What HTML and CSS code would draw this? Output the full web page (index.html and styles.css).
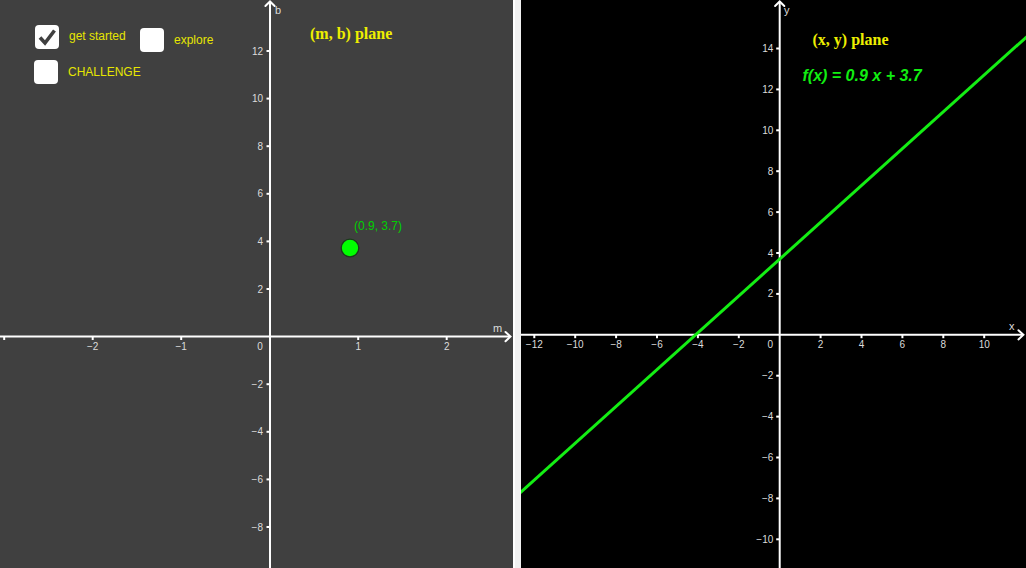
FILE: index.html
```html
<!DOCTYPE html>
<html>
<head>
<meta charset="utf-8">
<link rel="stylesheet" href="styles.css">
</head>
<body>
<div class="app">
  <section class="panel panel-mb">
    <svg class="graph" width="513" height="568" viewBox="0 0 513 568">
      <g class="axis">
        <line x1="0" y1="336.6" x2="510" y2="336.6"/>
        <polyline points="505.5,332 510.5,336.6 505.5,341.2"/>
        <line x1="270" y1="568" x2="270" y2="1.5"/>
        <polyline points="265.4,6 270,1.5 274.6,6"/>
      </g>
      <g class="ticks">
        <line x1="4.2" y1="336.6" x2="4.2" y2="340"/>
        <line x1="92.7" y1="336.6" x2="92.7" y2="340"/>
        <line x1="181.2" y1="336.6" x2="181.2" y2="340"/>
        <line x1="358.2" y1="336.6" x2="358.2" y2="340"/>
        <line x1="446.7" y1="336.6" x2="446.7" y2="340"/>
        <line x1="266.5" y1="51" x2="270" y2="51"/>
        <line x1="266.5" y1="98.6" x2="270" y2="98.6"/>
        <line x1="266.5" y1="146.2" x2="270" y2="146.2"/>
        <line x1="266.5" y1="193.8" x2="270" y2="193.8"/>
        <line x1="266.5" y1="241.4" x2="270" y2="241.4"/>
        <line x1="266.5" y1="289" x2="270" y2="289"/>
        <line x1="266.5" y1="384.2" x2="270" y2="384.2"/>
        <line x1="266.5" y1="431.8" x2="270" y2="431.8"/>
        <line x1="266.5" y1="479.4" x2="270" y2="479.4"/>
        <line x1="266.5" y1="527" x2="270" y2="527"/>
      </g>
      <g class="tick-labels xl">
        <text x="92.7" y="350">−2</text>
        <text x="181.2" y="350">−1</text>
        <text x="260" y="350">0</text>
        <text x="358.2" y="350">1</text>
        <text x="446.7" y="350">2</text>
      </g>
      <g class="tick-labels yl">
        <text x="263" y="54.5">12</text>
        <text x="263" y="102.1">10</text>
        <text x="263" y="149.7">8</text>
        <text x="263" y="197.3">6</text>
        <text x="263" y="244.9">4</text>
        <text x="263" y="292.5">2</text>
        <text x="263" y="387.7">−2</text>
        <text x="263" y="435.3">−4</text>
        <text x="263" y="482.9">−6</text>
        <text x="263" y="530.5">−8</text>
      </g>
      <text class="axis-name" x="275" y="14">b</text>
      <text class="axis-name" x="493" y="332">m</text>
      <text class="plane-title" x="310" y="38.5">(m, b) plane</text>
      <circle class="point" cx="350" cy="248" r="8.8"/>
      <text class="point-label" x="354" y="230">(0.9, 3.7)</text>
    </svg>
    <label class="control control-start">
      <span class="box checked">
        <svg width="24" height="24" viewBox="0 0 24 24"><polyline points="5,12.5 10,18 19.5,5.5"/></svg>
      </span>
      <span class="control-text">get started</span>
    </label>
    <label class="control control-explore">
      <span class="box"></span>
      <span class="control-text">explore</span>
    </label>
    <label class="control control-challenge">
      <span class="box"></span>
      <span class="control-text">CHALLENGE</span>
    </label>
  </section>
  <div class="divider"></div>
  <section class="panel panel-xy">
    <svg class="graph" width="505" height="568" viewBox="0 0 505 568">
      <g class="axis">
        <line x1="0" y1="334.8" x2="502" y2="334.8"/>
        <polyline points="497.4,330.2 502.4,334.8 497.4,339.4"/>
        <line x1="258.7" y1="568" x2="258.7" y2="1.5"/>
        <polyline points="254.1,6 258.7,1.5 263.3,6"/>
      </g>
      <g class="ticks">
        <line x1="13.3" y1="334.8" x2="13.3" y2="338.2"/>
        <line x1="54.2" y1="334.8" x2="54.2" y2="338.2"/>
        <line x1="95.1" y1="334.8" x2="95.1" y2="338.2"/>
        <line x1="136" y1="334.8" x2="136" y2="338.2"/>
        <line x1="176.9" y1="334.8" x2="176.9" y2="338.2"/>
        <line x1="217.8" y1="334.8" x2="217.8" y2="338.2"/>
        <line x1="299.6" y1="334.8" x2="299.6" y2="338.2"/>
        <line x1="340.5" y1="334.8" x2="340.5" y2="338.2"/>
        <line x1="381.4" y1="334.8" x2="381.4" y2="338.2"/>
        <line x1="422.3" y1="334.8" x2="422.3" y2="338.2"/>
        <line x1="463.2" y1="334.8" x2="463.2" y2="338.2"/>
        <line x1="255.2" y1="48.5" x2="258.7" y2="48.5"/>
        <line x1="255.2" y1="89.4" x2="258.7" y2="89.4"/>
        <line x1="255.2" y1="130.3" x2="258.7" y2="130.3"/>
        <line x1="255.2" y1="171.2" x2="258.7" y2="171.2"/>
        <line x1="255.2" y1="212.1" x2="258.7" y2="212.1"/>
        <line x1="255.2" y1="253" x2="258.7" y2="253"/>
        <line x1="255.2" y1="293.9" x2="258.7" y2="293.9"/>
        <line x1="255.2" y1="375.7" x2="258.7" y2="375.7"/>
        <line x1="255.2" y1="416.6" x2="258.7" y2="416.6"/>
        <line x1="255.2" y1="457.5" x2="258.7" y2="457.5"/>
        <line x1="255.2" y1="498.4" x2="258.7" y2="498.4"/>
        <line x1="255.2" y1="539.3" x2="258.7" y2="539.3"/>
      </g>
      <g class="tick-labels xl">
        <text x="13.3" y="348">−12</text>
        <text x="54.2" y="348">−10</text>
        <text x="95.1" y="348">−8</text>
        <text x="136" y="348">−6</text>
        <text x="176.9" y="348">−4</text>
        <text x="217.8" y="348">−2</text>
        <text x="249.4" y="348">0</text>
        <text x="299.6" y="348">2</text>
        <text x="340.5" y="348">4</text>
        <text x="381.4" y="348">6</text>
        <text x="422.3" y="348">8</text>
        <text x="463.2" y="348">10</text>
      </g>
      <g class="tick-labels yl">
        <text x="252.3" y="52">14</text>
        <text x="252.3" y="92.9">12</text>
        <text x="252.3" y="133.8">10</text>
        <text x="252.3" y="174.7">8</text>
        <text x="252.3" y="215.6">6</text>
        <text x="252.3" y="256.5">4</text>
        <text x="252.3" y="297.4">2</text>
        <text x="252.3" y="379.2">−2</text>
        <text x="252.3" y="420.1">−4</text>
        <text x="252.3" y="461">−6</text>
        <text x="252.3" y="501.9">−8</text>
        <text x="252.3" y="542.8">−10</text>
      </g>
      <text class="axis-name" x="263" y="14">y</text>
      <text class="axis-name" x="488" y="329.5">x</text>
      <line class="fn-line" x1="-2" y1="493.8" x2="507" y2="35.6"/>
      <text class="plane-title" x="291.5" y="44.5">(x, y) plane</text>
      <text class="fn-label" x="281.5" y="80.5">f(x) = 0.9 x + 3.7</text>
    </svg>
  </section>
</div>
</body>
</html>
```

FILE: styles.css
```css
html, body {
  margin: 0;
  padding: 0;
  background: #000;
}

body {
  font-family: "Liberation Sans", Arial, sans-serif;
}

.app {
  display: flex;
  width: 1026px;
  height: 568px;
  overflow: hidden;
}

.panel {
  position: relative;
  height: 568px;
  overflow: hidden;
}

.panel-mb {
  width: 513px;
  background: #404040;
}

.panel-xy {
  flex: 1;
  background: #000;
}

.divider {
  width: 8px;
  background: linear-gradient(to right, #ffffff 0, #ffffff 2px, #f1f1f1 2px, #f1f1f1 100%);
}

.graph {
  display: block;
}

.axis line,
.axis polyline {
  stroke: #ffffff;
  stroke-width: 2;
  fill: none;
}

.axis polyline {
  stroke-linecap: round;
  stroke-linejoin: miter;
}

.ticks line {
  stroke: #ffffff;
  stroke-width: 2;
}

.tick-labels text {
  font-family: "Liberation Sans", Arial, sans-serif;
  font-size: 10px;
  fill: #dcdcdc;
}

.tick-labels.xl text {
  text-anchor: middle;
}

.tick-labels.yl text {
  text-anchor: end;
}

.axis-name {
  font-family: "Liberation Sans", Arial, sans-serif;
  font-size: 11px;
  fill: #dcdcdc;
}

.plane-title {
  font-family: "Liberation Serif", "Times New Roman", serif;
  font-weight: bold;
  font-size: 16px;
  fill: #eeee00;
}

.point {
  fill: #00ff00;
  stroke: #1c3a1c;
  stroke-width: 1.3;
}

.point-label {
  font-family: "Liberation Sans", Arial, sans-serif;
  font-size: 12px;
  fill: #00d000;
}

.fn-line {
  stroke: #14ee14;
  stroke-width: 3;
}

.fn-label {
  font-family: "Liberation Sans", Arial, sans-serif;
  font-weight: bold;
  font-style: italic;
  font-size: 16px;
  fill: #11ee11;
}

.control {
  position: absolute;
  display: flex;
  align-items: center;
  gap: 10px;
}

.control-start {
  left: 35px;
  top: 25px;
}

.control-explore {
  left: 140px;
  top: 28px;
}

.control-challenge {
  left: 34px;
  top: 60px;
}

.box {
  display: block;
  width: 24px;
  height: 24px;
  border-radius: 4px;
  background: #ffffff;
}

.box svg {
  display: block;
}

.box polyline {
  fill: none;
  stroke: #404040;
  stroke-width: 3.6;
  stroke-linecap: butt;
  stroke-linejoin: miter;
}

.control-text {
  font-family: "Liberation Sans", Arial, sans-serif;
  font-size: 12px;
  color: #e6e600;
  position: relative;
}

.control-start .control-text {
  top: -1px;
}
```
